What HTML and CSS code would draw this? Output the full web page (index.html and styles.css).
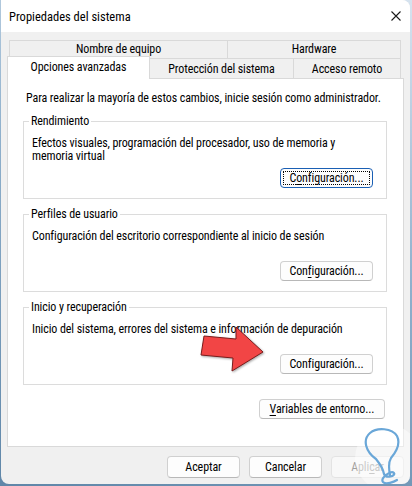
FILE: index.html
```html
<!DOCTYPE html>
<html lang="es">
<head>
<meta charset="UTF-8">
<meta name="viewport" content="width=device-width, initial-scale=1.0">
<title>Propiedades del sistema</title>
<link rel="stylesheet" href="styles.css">
</head>
<body>
<div class="window">
  <div class="titlebar">
    <span class="title">Propiedades del sistema</span>
    <svg class="close" width="10" height="10" viewBox="0 0 10 10">
      <path d="M0.5 0.5 L9.5 9.5 M9.5 0.5 L0.5 9.5" stroke="#1a1a1a" stroke-width="1.1" fill="none"/>
    </svg>
  </div>

  <div class="content">
    <div class="tabs tabs-back">
      <div class="tab tab-name">Nombre de equipo</div>
      <div class="tab tab-hw">Hardware</div>
    </div>
    <div class="tabs tabs-front">
      <div class="tab tab-adv active">Opciones avanzadas</div>
      <div class="tab tab-prot">Protección del sistema</div>
      <div class="tab tab-remote">Acceso remoto</div>
    </div>

    <div class="panel">
      <p class="intro">Para realizar la mayoría de estos cambios, inicie sesión como administrador.</p>

      <fieldset class="group">
        <legend>Rendimiento</legend>
        <p class="group-text">Efectos visuales, programación del procesador, uso de memoria y<br>memoria virtual</p>
        <button class="button group-button focused">C<u>o</u>nfiguración...</button>
      </fieldset>

      <fieldset class="group">
        <legend>Perfiles de usuario</legend>
        <p class="group-text">Configuración del escritorio correspondiente al inicio de sesión</p>
        <button class="button group-button">Con<u>f</u>iguración...</button>
      </fieldset>

      <fieldset class="group">
        <legend>Inicio y recuperación</legend>
        <p class="group-text">Inicio del sistema, errores del sistema e información de depuración</p>
        <button class="button group-button">Confi<u>g</u>uración...</button>
      </fieldset>

      <div class="env-row">
        <button class="button env-button"><u>V</u>ariables de entorno...</button>
      </div>
    </div>

    <div class="footer">
      <button class="button footer-button">Aceptar</button>
      <button class="button footer-button">Cancelar</button>
      <button class="button footer-button disabled">Apli<u>c</u>ar</button>
    </div>
  </div>

  <!-- red pointer arrow drawn over the dialog -->
  <svg class="arrow" width="70" height="50" viewBox="198 324 70 50">
    <polygon points="204,336 236,339 236,327 263,352 232,371 233,358 201,355"
             fill="#f24545" stroke="#7a1b1b" stroke-width="1" stroke-linejoin="round"/>
  </svg>

  <!-- watermark in the corner -->
  <svg class="mark" width="80" height="70" viewBox="340 416 80 70">
    <circle cx="388" cy="458" r="33" fill="rgba(255,255,255,0.45)"/>
    <path d="M376 459 C366 452 362 440 370 433 C377 427 392 428 397 436 C401 444 396 452 391 458 C388 463 389 470 390 475
             M376 459 C380 464 383 468 384 474 C386 479 396 476 394 473 C391 470 380 478 383 482 C386 485 394 482 397 480"
          fill="none" stroke="#6aa7d8" stroke-width="2.2" stroke-linecap="round" stroke-linejoin="round"/>
  </svg>
</div>
</body>
</html>
```
FILE: styles.css
```css
:root {
  --w-bg: #f0f0f0;
  --w-line: #d9d9d9;
  --w-text: #000;
  --w-btn-line: #d0d0d0;
}

*,
::before,
::after {
  box-sizing: border-box;
}

html,
body {
  margin: 0;
  padding: 0;
}

body {
  width: 412px;
  height: 486px;
  background: linear-gradient(200deg, #d6e3ef 0%, #8fb0cc 45%, #5f86a8 100%);
  font-family: Roboto, "Noto Sans", sans-serif;
  font-size: 12px;
  font-stretch: condensed;
  letter-spacing: -0.1px;
  color: var(--w-text);
  overflow: hidden;
}

.window {
  position: relative;
  width: 409px;
  height: 484px;
  margin-left: 1px;
  background-color: var(--w-bg);
  border-radius: 0 8px 8px 8px;
  overflow: hidden;
}

/* Title bar */
.titlebar {
  height: 32px;
  background-color: #fff;
  padding: 0 9px 0 8px;
  display: flex;
  align-items: center;
  justify-content: space-between;
}

.title {
  font-size: 12.5px;
  letter-spacing: 0;
  padding-top: 1px;
}

.close {
  display: block;
  margin-top: -1px;
}

.content {
  padding: 8px 6px 0 6px;
}

/* Tabs */
.tabs {
  display: flex;
}

.tabs-back {
  height: 18px;
  margin: 0 3px 0 2px;
}

.tabs-front {
  height: 22px;
  margin-top: -2px;
  align-items: flex-end;
}

.tab {
  display: flex;
  align-items: center;
  justify-content: center;
  height: 100%;
  background-color: var(--w-bg);
  border: 1px solid var(--w-line);
  border-bottom: 0;
  white-space: nowrap;
}

.tab + .tab {
  margin-left: -1px;
}

.tab-name { width: 219px; padding-bottom: 1px; }
.tab-hw { width: 174px; padding-bottom: 1px; }
.tab-adv { width: 143px; }
.tab-prot { width: 145px; height: 20px; }
.tab-remote { width: 108px; height: 20px; }

.tab.active {
  position: relative;
  z-index: 1;
  height: 23px;
  margin-bottom: -1px;
  background-color: #fff;
  padding-bottom: 3px;
}

.tab-prot,
.tab-remote {
  padding-top: 1px;
}

/* Panel */
.panel {
  height: 369px;
  background-color: #fff;
  border: 1px solid var(--w-line);
  padding: 12px 16px 0 15px;
}

.intro {
  margin: 0 0 9px 3px;
  line-height: 14px;
  white-space: nowrap;
}

.group {
  display: flex;
  flex-direction: column;
  height: 85px;
  margin: 0 0 8px 0;
  padding: 9px 13px 10px 8px;
  border: 1px solid #dcdcdc;
  min-width: 0;
}

.group legend {
  margin-left: -3px;
  padding: 0 2px;
  line-height: 14px;
}

.group-text {
  margin: 0;
  line-height: 13px;
  white-space: nowrap;
}

/* Buttons */
.button {
  height: 20px;
  padding: 0 0 1px;
  font: inherit;
  letter-spacing: inherit;
  color: var(--w-text);
  background-color: #fdfdfd;
  border: 1px solid var(--w-btn-line);
  border-bottom-color: #b8b8b8;
  border-radius: 4px;
}

.button u {
  text-underline-offset: 2px;
}

.group-button {
  width: 93px;
  margin-top: auto;
  align-self: flex-end;
}

.focused {
  border: 1px solid #1a5fb4;
  outline: 1px dotted #000;
  outline-offset: -4px;
}

.env-row {
  display: flex;
  justify-content: flex-end;
  padding: 6px 2px 0 0;
}

.env-button {
  width: 126px;
}

.footer {
  display: flex;
  justify-content: flex-end;
  gap: 9px;
  padding-top: 9px;
}

.footer-button {
  width: 73px;
  height: 22px;
}

.disabled {
  color: #a0a0a0;
  border-color: #e3e3e3;
  background-color: #f8f8f8;
}

/* Overlays */
.arrow {
  position: absolute;
  left: 197px;
  top: 324px;
  filter: drop-shadow(1px 1px 1px rgba(0, 0, 0, 0.35));
}

.mark {
  position: absolute;
  left: 339px;
  top: 416px;
}
```
